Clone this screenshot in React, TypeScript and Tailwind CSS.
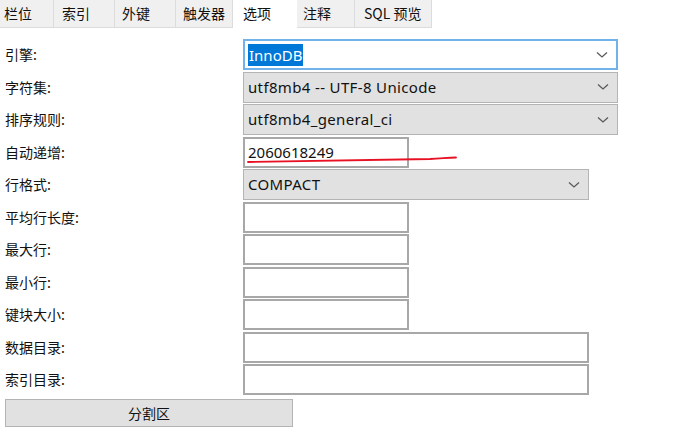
import React from "react";

const tabs = [
  { label: "栏位", w: "w-[54px]", pl: "pl-[4px]", active: false },
  { label: "索引", w: "w-[61px]", pl: "pl-[8px]", active: false },
  { label: "外键", w: "w-[61px]", pl: "pl-[7px]", active: false },
  { label: "触发器", w: "w-[57px]", pl: "pl-[7px]", active: false },
  { label: "选项", w: "w-[64px]", pl: "pl-[10px]", active: true },
  { label: "注释", w: "w-[58px]", pl: "pl-[6px]", active: false },
  { label: "SQL 预览", w: "w-[77px]", pl: "pl-[9px]", active: false },
];

const font = "font-['Noto_Sans','Noto_Sans_CJK_SC',sans-serif]";
const cjk = "font-['Noto_Sans_CJK_SC',sans-serif]";

function Chevron() {
  return (
    <svg width="12" height="8" viewBox="0 0 12 8" className="shrink-0">
      <path d="M1 1.5 L6 6 L11 1.5" fill="none" stroke="#5a5a5a" strokeWidth="1.3" />
    </svg>
  );
}

function GraySelect({ value, w }: { value: string; w: string }) {
  return (
    <div
      className={`${w} h-full flex items-center justify-between bg-[#e1e1e1] border border-[#b4b4b4] pl-[4px] pr-[8px] text-[15px] tracking-[0.35px] text-[#111] ${font}`}
    >
      <span className="leading-none">{value}</span>
      <Chevron />
    </div>
  );
}

function TextBox({ w, value }: { w: string; value?: string }) {
  return (
    <div
      className={`${w} h-full flex items-center bg-white border-2 border-[#a8a8a8] pl-[3px] text-[15px] text-[#111] ${font}`}
    >
      {value && <span className="leading-none">{value}</span>}
    </div>
  );
}

function Row({ label, children }: { label: string; children: React.ReactNode }) {
  return (
    <div className="flex items-center h-[31px]">
      <div className={`w-[243px] pl-[5px] text-[14px] text-[#111] ${cjk}`}>{label}</div>
      {children}
    </div>
  );
}

export default function App() {
  return (
    <div className="relative w-[673px] h-[440px] bg-white overflow-hidden">
      <div className="flex h-[28px] bg-white">
        {tabs.map((t) =>
          t.active ? (
            <div
              key={t.label}
              className={`${t.w} ${t.pl} h-full flex items-start pt-[3px] bg-white text-[14px] text-[#111] ${cjk}`}
            >
              {t.label}
            </div>
          ) : (
            <div
              key={t.label}
              className={`${t.w} ${t.pl} h-full flex items-center bg-[#f0f0f0] border-r border-b border-[#dcdcdc] text-[14px] text-[#111] ${cjk}`}
            >
              {t.label}
            </div>
          )
        )}
      </div>

      <div className="flex flex-col gap-[1.5px] pt-[11px]">
        <Row label="引擎:">
          <div
            className={`w-[375px] h-full flex items-center justify-between bg-white border-2 border-[#72b2ea] pl-[3px] pr-[8px] text-[15px] ${font}`}
          >
            <span className="bg-[#0078d7] text-white leading-[22px] px-[1px]">InnoDB</span>
            <Chevron />
          </div>
        </Row>
        <Row label="字符集:">
          <GraySelect w="w-[375px]" value="utf8mb4 -- UTF-8 Unicode" />
        </Row>
        <Row label="排序规则:">
          <GraySelect w="w-[375px]" value="utf8mb4_general_ci" />
        </Row>
        <Row label="自动递增:">
          <TextBox w="w-[166px]" value="2060618249" />
        </Row>
        <Row label="行格式:">
          <GraySelect w="w-[346px]" value="COMPACT" />
        </Row>
        <Row label="平均行长度:">
          <TextBox w="w-[166px]" />
        </Row>
        <Row label="最大行:">
          <TextBox w="w-[166px]" />
        </Row>
        <Row label="最小行:">
          <TextBox w="w-[166px]" />
        </Row>
        <Row label="键块大小:">
          <TextBox w="w-[166px]" />
        </Row>
        <Row label="数据目录:">
          <TextBox w="w-[346px]" />
        </Row>
        <Row label="索引目录:">
          <TextBox w="w-[346px]" />
        </Row>
        <div className="pl-[5px] pt-[2.5px]">
          <div
            className={`w-[288px] h-[28px] flex items-center justify-center bg-[#e1e1e1] border border-[#b4b4b4] text-[14px] text-[#111] ${cjk}`}
          >
            分割区
          </div>
        </div>
      </div>

      <svg
        className="absolute left-0 top-0 pointer-events-none"
        width="673"
        height="440"
        viewBox="0 0 673 440"
      >
        <path
          d="M248 162 C 320 161, 380 160, 430 159 C 442 158.5, 448 157.5, 456 157.5"
          fill="none"
          stroke="#e81123"
          strokeWidth="1.8"
          strokeLinecap="round"
        />
      </svg>
    </div>
  );
}
